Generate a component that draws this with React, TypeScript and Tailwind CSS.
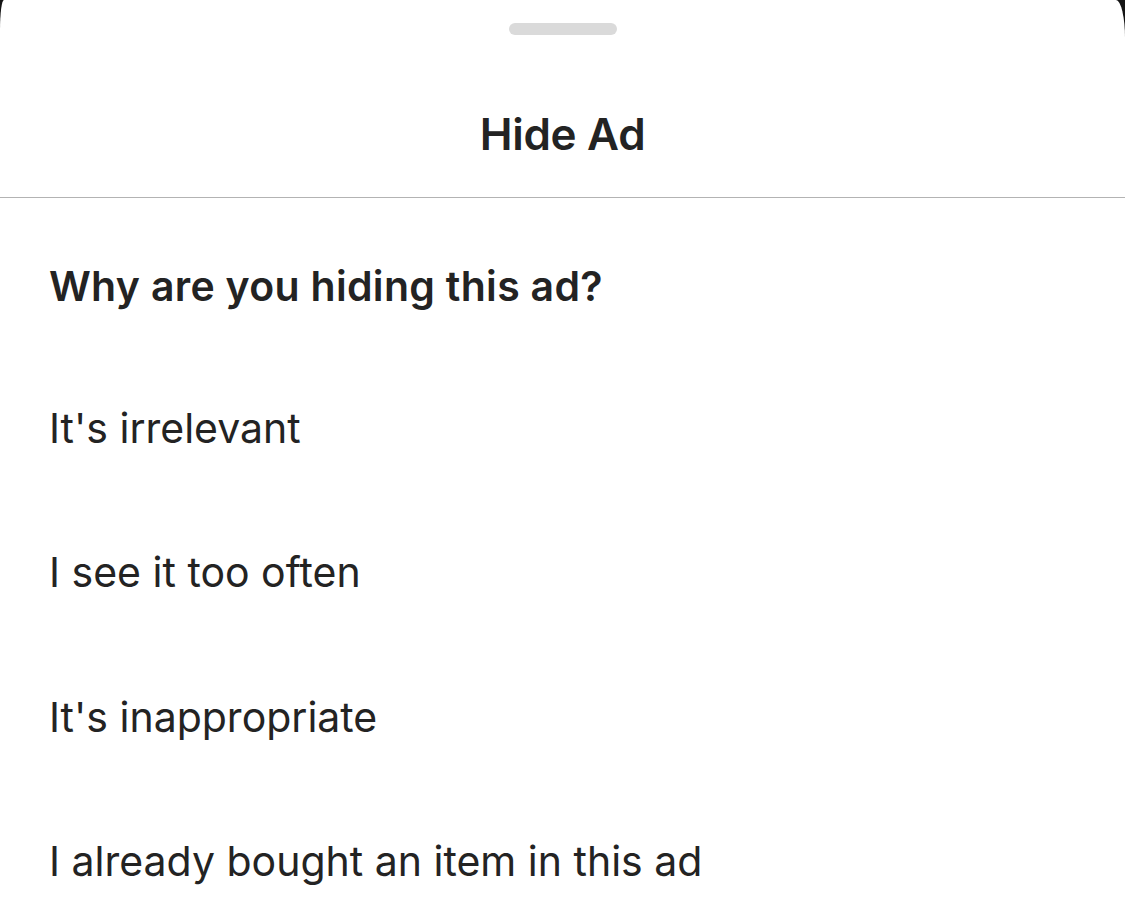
const reasons = [
  "It's irrelevant",
  'I see it too often',
  "It's inappropriate",
  'I already bought an item in this ad',
];

const App = () => {
  return (
    <div className="h-[923px] w-full overflow-hidden bg-[#141414]">
      <div
        className="h-full w-full rounded-tl-[4px_30px] rounded-tr-[9px_38px] bg-white text-[#232323]"
        style={{ fontFamily: 'Inter, "Noto Sans", sans-serif' }}
      >
        <div className="flex h-[197px] flex-col items-center">
          <div className="mt-[23px] h-[12px] w-[108px] rounded-full bg-[#dadada]" />
          <h1 className="mt-[77px] text-[44px] leading-none font-semibold tracking-[-0.3px]">Hide Ad</h1>
        </div>
        <div className="h-px bg-[#b3b3b3]" />
        <div className="pt-[18px] pl-[49px]">
          <div className="flex h-[140px] items-center">
            <p className="text-[41px] leading-none font-semibold tracking-[0.3px]">Why are you hiding this ad?</p>
          </div>
          {reasons.map((r) => (
            <div key={r} className="flex h-[144.5px] items-center">
              <p className="text-[41px] leading-none">{r}</p>
            </div>
          ))}
        </div>
      </div>
    </div>
  );
};

export default App;
